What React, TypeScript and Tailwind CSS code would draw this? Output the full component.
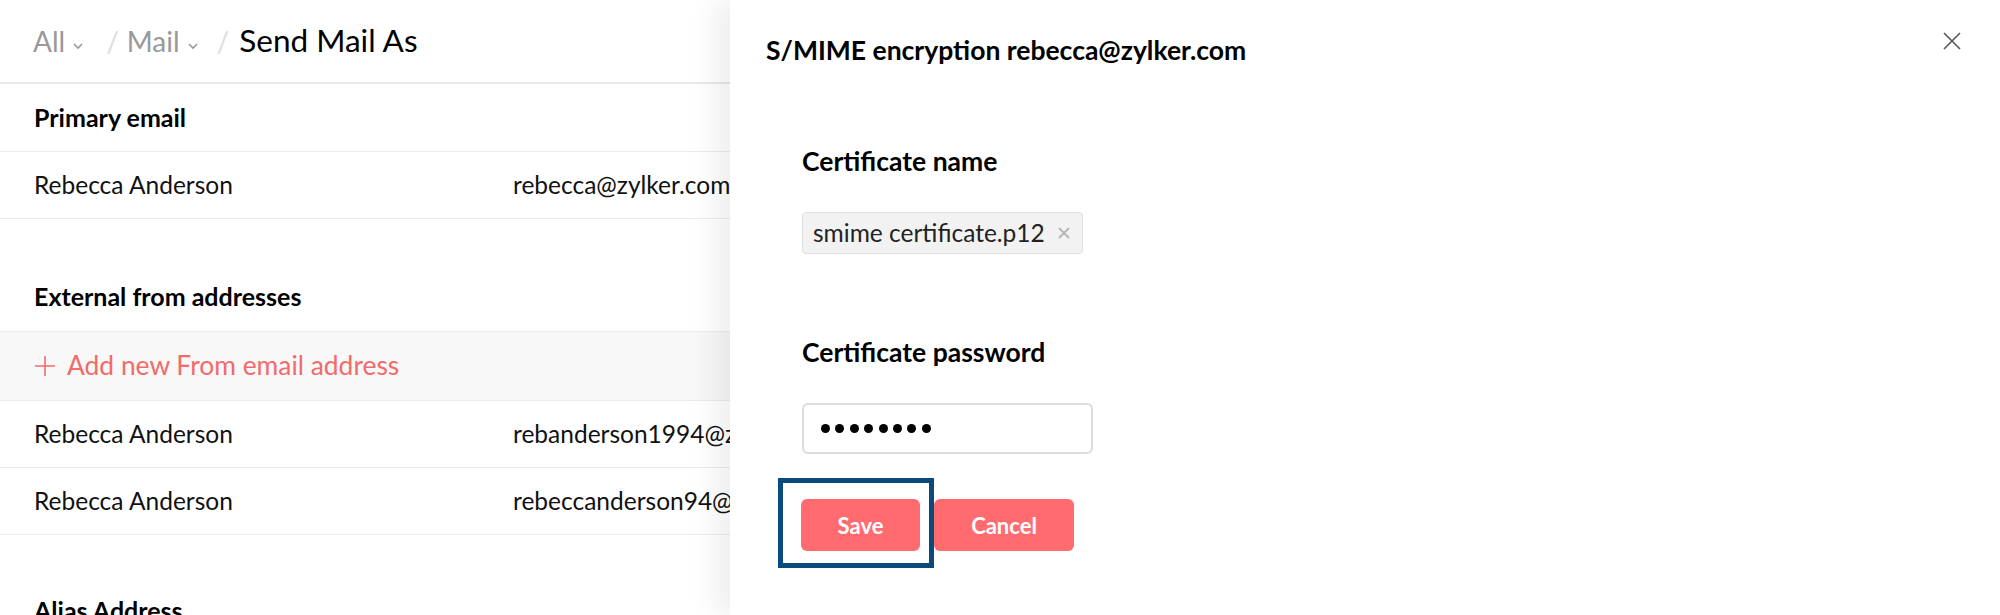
import React from "react";

const rows = [
  { name: "Rebecca Anderson", email: "rebanderson1994@zylker.com" },
  { name: "Rebecca Anderson", email: "rebeccanderson94@zylker.com" },
];

function Chevron() {
  return (
    <svg width="12" height="8" viewBox="0 0 12 8" className="mt-[10px]">
      <path d="M2 2l4 4 4-4" fill="none" stroke="#999" strokeWidth="1.6" />
    </svg>
  );
}

function Row({ name, email }: { name: string; email: string }) {
  return (
    <div className="flex h-[67px] items-center border-b border-[#ececec] pl-[34px] text-[24.5px] text-[#111]">
      <span className="w-[479px] shrink-0">{name}</span>
      <span className="whitespace-nowrap">{email}</span>
    </div>
  );
}

export default function App() {
  return (
    <div className="flex h-[615px] w-[2000px] overflow-hidden bg-white font-['Lato',sans-serif]">
      {/* Settings list (partly covered) */}
      <div className="w-[730px] shrink-0 overflow-hidden">
        <div className="flex h-[84px] items-center border-b-2 border-[#e8e8e8] pl-[33px] text-[28px]">
          <span className="text-[#999]">All</span>
          <span className="ml-[7px]"><Chevron /></span>
          <span className="ml-[22px] mr-[8px] text-[#ddd]">/</span>
          <span className="text-[#999]">Mail</span>
          <span className="ml-[7px]"><Chevron /></span>
          <span className="ml-[18px] mr-[10px] text-[#ddd]">/</span>
          <span className="text-[31.5px] text-black">Send Mail As</span>
        </div>

        <div className="flex h-[68px] items-center border-b border-[#ececec] pl-[34px] text-[25px] font-bold text-black">
          Primary email
        </div>
        <Row name="Rebecca Anderson" email="rebecca@zylker.com" />

        <div className="mt-[44px] flex h-[68px] items-center pl-[34px] text-[25px] font-bold text-black">
          External from addresses
        </div>
        <div className="flex h-[70px] items-center gap-[11px] border-y border-[#ececec] bg-[#f8f8f8] pl-[34px] text-[26.4px] text-[#f26b6b]">
          <svg width="22" height="22" viewBox="0 0 22 22">
            <path d="M11 1v20M1 11h20" stroke="#f26b6b" strokeWidth="1.6" />
          </svg>
          Add new From email address
        </div>
        {rows.map((r) => (
          <Row key={r.email} name={r.name} email={r.email} />
        ))}

        <div className="mt-[42px] flex h-[68px] items-center pl-[34px] text-[25px] font-bold text-black">
          Alias Address
        </div>
      </div>

      {/* S/MIME panel */}
      <div className="relative z-10 flex-1 bg-white shadow-[-14px_0_28px_rgba(0,0,0,0.07)]">
        <div className="flex items-start justify-between pl-[36px] pr-[39px] pt-[32px]">
          <h2 className="mt-[4px] text-[26.5px] font-bold leading-[28px] text-black">
            S/MIME encryption rebecca@zylker.com
          </h2>
          <svg width="18" height="18" viewBox="0 0 18 18">
            <path d="M1 1l16 16M17 1L1 17" stroke="#555" strokeWidth="1.6" />
          </svg>
        </div>

        <div className="pl-[72px]">
          <div className="mt-[83px] text-[26.5px] font-bold leading-[28px] text-black">Certificate name</div>
          <div className="mt-[37px] inline-flex h-[42px] items-center gap-[13px] rounded-[4px] border border-[#dedede] bg-[#f2f2f2] pl-[10px] pr-[12px] text-[24.5px] text-[#222]">
            smime certificate.p12
            <svg width="12" height="12" viewBox="0 0 12 12">
              <path d="M1 1l10 10M11 1L1 11" stroke="#b5b5b5" strokeWidth="1.8" />
            </svg>
          </div>

          <div className="mt-[84px] text-[26.5px] font-bold leading-[28px] text-black">Certificate password</div>
          <div className="mt-[37px] flex h-[51px] w-[291px] items-center gap-[5.4px] rounded-[6px] border-2 border-[#dcdcdc] pl-[17px]">
            {Array.from({ length: 8 }).map((_, i) => (
              <span key={i} className="h-[9px] w-[9px] rounded-full bg-black" />
            ))}
          </div>

          <div className="-ml-[24px] mt-[24px] flex items-start">
            <div className="h-[90px] w-[156px] border-[5px] border-[#0d4a7c] pl-[18px] pt-[16px]">
              <button className="h-[52px] w-[119px] rounded-[6px] bg-[#ff6b6f] text-[22px] font-bold text-white">
                Save
              </button>
            </div>
            <button className="mt-[21px] h-[52px] w-[140px] rounded-[6px] bg-[#ff6b6f] text-[22px] font-bold text-white">
              Cancel
            </button>
          </div>
        </div>
      </div>
    </div>
  );
}
